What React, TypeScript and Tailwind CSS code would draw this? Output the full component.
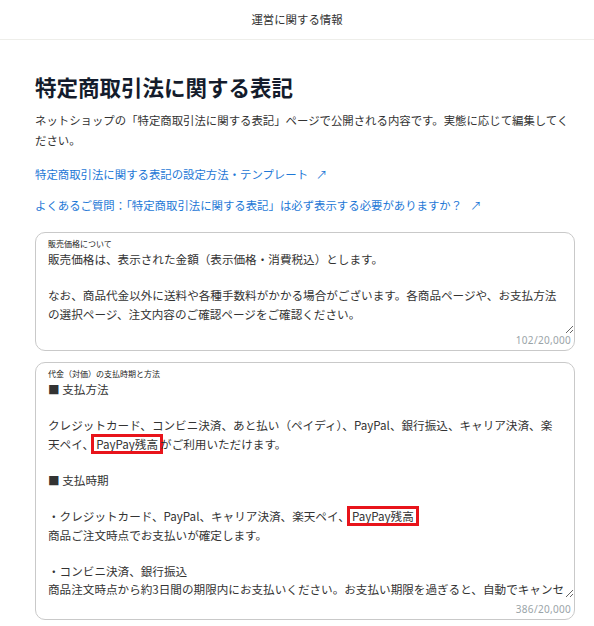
import React from "react";

const jp = { fontFamily: '"Noto Sans CJK JP", "Noto Sans", sans-serif' };

type Piece = string | { mark: string };

const priceLines: Piece[][] = [
  ["販売価格は、表示された金額（表示価格・消費税込）とします。"],
  [""],
  ["なお、商品代金以外に送料や各種手数料がかかる場合がございます。各商品ページや、お支払方法"],
  ["の選択ページ、注文内容のご確認ページをご確認ください。"],
];

// the box only shows up to "キャンセ"; the rest scrolls out of view
const paymentLines: Piece[][] = [
  ["■ 支払方法"],
  [""],
  ["クレジットカード、コンビニ決済、あと払い（ペイディ）、PayPal、銀行振込、キャリア決済、楽"],
  ["天ペイ、", { mark: "PayPay残高" }, "がご利用いただけます。"],
  [""],
  ["■ 支払時期"],
  [""],
  ["・クレジットカード、PayPal、キャリア決済、楽天ペイ、", { mark: "PayPay残高" }],
  ["商品ご注文時点でお支払いが確定します。"],
  [""],
  ["・コンビニ決済、銀行振込"],
  ["商品注文時点から約3日間の期限内にお支払いください。お支払い期限を過ぎると、自動でキャンセ"],
];

function FieldBox({
  label,
  lines,
  count,
  height,
}: {
  label: string;
  lines: Piece[][];
  count: string;
  height: string;
}) {
  return (
    <div className="flex flex-col rounded-[10px] border border-[#c9c9c9] bg-white pt-[5px] pb-[4px]">
      <div className="px-[12px] text-[8px] leading-[12px] text-[#222]" style={jp}>
        {label}
      </div>
      <div
        className={`resize-y overflow-hidden pl-[12px] pr-[3px] text-[11.6px] leading-[18.2px] text-[#333] whitespace-pre-wrap ${height}`}
        style={jp}
      >
        {lines.map((line, i) => (
          <div key={i} className="min-h-[18.2px]">
            {line.map((p, j) =>
              typeof p === "string" ? (
                <span key={j}>{p}</span>
              ) : (
                <span
                  key={j}
                  className="inline-block h-[14px] leading-[14px] px-[2px] outline-[3px] outline-solid outline-[#e8141b] bg-white"
                >
                  {p.mark}
                </span>
              )
            )}
          </div>
        ))}
      </div>
      <div
        className="mt-auto pr-[3px] text-right text-[10px] leading-[12px] tracking-[0.3px] text-[#9aa4a8]"
        style={{ fontFamily: '"Noto Sans", sans-serif' }}
      >
        {count}
      </div>
    </div>
  );
}

export default function App() {
  return (
    <div className="min-h-[626px] bg-white" style={jp}>
      <header className="flex h-10 items-center justify-center border-b border-[#eeeeea] text-[11.4px] text-[#333]">
        運営に関する情報
      </header>

      <main className="pl-[35px] pr-[19px]">
        <h1 className="mt-[32px] text-[21.5px] leading-[30px] font-bold text-[#141c2c]">
          特定商取引法に関する表記
        </h1>
        <p className="mt-[8px] text-[11.4px] leading-[20px] text-[#333]">
          ネットショップの「特定商取引法に関する表記」ページで公開される内容です。実態に応じて編集してください。
        </p>

        <div className="mt-[14px] flex flex-col gap-[11px] text-[11.4px] leading-[20px] text-[#1e78d6]">
          <a href="#" className="w-fit">
            特定商取引法に関する表記の設定方法・テンプレート
            <span className="ml-[8px]">↗</span>
          </a>
          <a href="#" className="w-fit">
            よくあるご質問：「特定商取引法に関する表記」は必ず表示する必要がありますか？
            <span className="ml-[8px]">↗</span>
          </a>
        </div>

        <div className="mt-[17px] flex flex-col gap-[10px]">
          <div className="h-[120px] flex flex-col">
            <FieldBox
              label="販売価格について"
              lines={priceLines}
              count="102/20,000"
              height="h-[84px]"
            />
          </div>
          <div className="h-[258px] flex flex-col [&>div]:flex-1">
            <FieldBox
              label="代金（対価）の支払時期と方法"
              lines={paymentLines}
              count="386/20,000"
              height="h-[218px]"
            />
          </div>
        </div>
      </main>
    </div>
  );
}
